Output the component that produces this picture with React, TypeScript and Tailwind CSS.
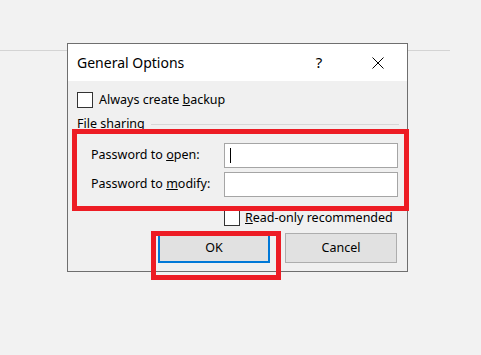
import { ReactNode } from "react";

function Check({ className = "" }: { className?: string }) {
  return (
    <span
      className={`block w-[16px] h-[16px] border border-[#333333] bg-white shrink-0 ${className}`}
    />
  );
}

function Field({ label, first }: { label: ReactNode; first?: boolean }) {
  return (
    <div className="flex items-center">
      <span className="w-[147px] pl-[14px] text-[12.5px] whitespace-nowrap">{label}</span>
      <div className="relative w-[174px] h-[25px] bg-white border border-[#a5a5a5]">
        {first && (
          <span className="absolute left-[5px] top-[4px] w-px h-[15px] bg-black" />
        )}
      </div>
    </div>
  );
}

export default function App() {
  return (
    <div
      className="relative w-[481px] h-[355px] overflow-hidden bg-[#f2f2f2] text-black"
      style={{ fontFamily: '"Segoe UI", "Noto Sans", sans-serif' }}
    >
      {/* page edge behind the dialog */}
      <div className="absolute left-0 top-[50px] w-[450px] h-px bg-[#d4d4d4]" />

      <div className="relative ml-[67px] pt-[43px]">
        <div className="w-[341px] h-[229px] border border-[#6f6f6f] bg-[#f0f0f0] flex flex-col overflow-hidden">
          {/* title bar */}
          <div className="h-[37px] shrink-0 bg-white flex items-center pl-[9px]">
            <span className="text-[14px] leading-none whitespace-nowrap">General Options</span>
            <span className="ml-auto w-[14px] text-center text-[15px] leading-none">?</span>
            <svg
              width="12"
              height="12"
              viewBox="0 0 12 12"
              className="ml-[46px] mr-[23px]"
              stroke="#000"
              strokeWidth="1"
            >
              <path d="M0.5 0.5 L11.5 11.5 M11.5 0.5 L0.5 11.5" />
            </svg>
          </div>

          <div className="flex flex-col pl-[9px] pr-[8px]">
            <label className="mt-[11px] flex items-center gap-[6px] text-[12.5px] leading-none whitespace-nowrap">
              <Check />
              <span>
                Always create <u>b</u>ackup
              </span>
            </label>

            <div className="mt-[7px] h-[18px] flex items-center gap-[6px] text-[12.5px]">
              <span className="whitespace-nowrap">File sharing</span>
              <span className="flex-1 h-px bg-[#d7d7d7]" />
            </div>

            <div className="mt-[10px] flex flex-col gap-[4px]">
              <Field
                first
                label={
                  <>
                    Password to <u>o</u>pen:
                  </>
                }
              />
              <Field
                label={
                  <>
                    Password to <u>m</u>odify:
                  </>
                }
              />
            </div>

            <label className="mt-[13px] ml-[147px] flex items-center gap-[5px] text-[12.5px] leading-none whitespace-nowrap">
              <Check />
              <span>
                <u>R</u>ead-only recommended
              </span>
            </label>

            <div className="mt-[7px] ml-[81px] flex gap-[15px]">
              <button className="w-[112px] h-[30px] bg-[#e1e1e1] border-2 border-[#0078d7] text-[12.5px]">
                OK
              </button>
              <button className="w-[112px] h-[30px] bg-[#e1e1e1] border border-[#adadad] text-[12.5px]">
                Cancel
              </button>
            </div>
          </div>
        </div>
      </div>

      {/* annotation boxes */}
      <div className="absolute left-[72px] top-[129px] w-[337px] h-[82px] border-[5px] border-[#ed1c24]" />
      <div className="absolute left-[151px] top-[231px] w-[130px] h-[49px] border-[5px] border-[#ed1c24]" />
    </div>
  );
}
